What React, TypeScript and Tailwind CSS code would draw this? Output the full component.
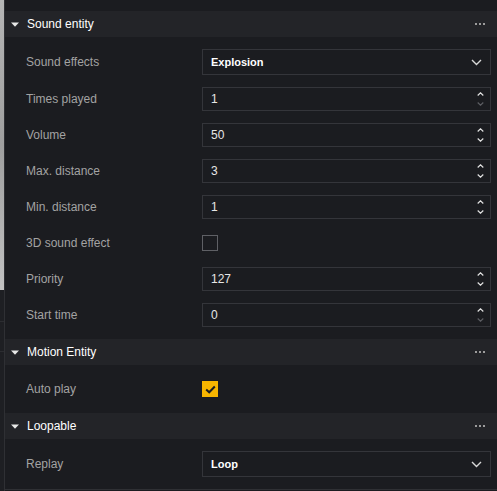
import React from 'react';

const Caret = () => (
  <svg width="8" height="5" viewBox="0 0 8 5" className="shrink-0">
    <path d="M0 0.5 L8 0.5 L4 4.8 Z" fill="#e8e8e8" />
  </svg>
);

const Dots = () => (
  <div className="flex gap-[2px]">
    <span className="w-[2px] h-[2px] bg-[#9c9c9c]" />
    <span className="w-[2px] h-[2px] bg-[#9c9c9c]" />
    <span className="w-[2px] h-[2px] bg-[#9c9c9c]" />
  </div>
);

const SectionHeader = ({ title }: { title: string }) => (
  <div className="h-[26px] bg-[#232428] flex items-center pl-[6px] pr-[12px]">
    <Caret />
    <span className="ml-[8px] text-[12px] text-white">{title}</span>
    <div className="flex-1" />
    <Dots />
  </div>
);

const Row = ({ label, children }: { label: string; children: React.ReactNode }) => (
  <div className="h-[36px] flex items-center">
    <span className="w-[176px] shrink-0 text-[12px] text-[#a3a3a3]">{label}</span>
    <div className="flex-1 flex items-center">{children}</div>
  </div>
);

const Select = ({ value }: { value: string }) => (
  <div className="w-full h-[26px] border border-[#34353a] flex items-center pl-[8px] pr-[8px]">
    <span className="text-[11px] font-bold text-white">{value}</span>
    <div className="flex-1" />
    <svg width="11" height="7" viewBox="0 0 11 7">
      <path d="M1 1 L5.5 5.5 L10 1" stroke="#d8d8d8" strokeWidth="1.4" fill="none" />
    </svg>
  </div>
);

const NumberInput = ({ value, downDisabled }: { value: string; downDisabled?: boolean }) => (
  <div className="w-full h-[24px] border border-[#34353a] flex items-center pl-[8px] pr-[6px]">
    <span className="text-[12px] text-[#e6e6e6]">{value}</span>
    <div className="flex-1" />
    <div className="flex flex-col items-center gap-[6px]">
      <svg width="7" height="4" viewBox="0 0 7 4">
        <path d="M0.7 3.5 L3.5 0.8 L6.3 3.5" stroke="#e0e0e0" strokeWidth="1.2" fill="none" />
      </svg>
      <svg width="7" height="4" viewBox="0 0 7 4">
        <path d="M0.7 0.5 L3.5 3.2 L6.3 0.5" stroke={downDisabled ? '#5c5d62' : '#e0e0e0'} strokeWidth="1.2" fill="none" />
      </svg>
    </div>
  </div>
);

const Checkbox = ({ checked }: { checked?: boolean }) =>
  checked ? (
    <div className="w-[16px] h-[16px] bg-[#f7b500] flex items-center justify-center">
      <svg width="11" height="9" viewBox="0 0 11 9">
        <path d="M1.2 4.5 L4.2 7.3 L9.8 1.5" stroke="#1b1c20" strokeWidth="2" fill="none" />
      </svg>
    </div>
  ) : (
    <div className="w-[16px] h-[16px] border-[1.5px] border-[#5f6065]" />
  );

export default function App() {
  return (
    <div
      className="w-[497px] h-[491px] flex bg-[#1b1c20] overflow-hidden"
      style={{ fontFamily: '"Liberation Sans", Arial, sans-serif' }}
    >
      <div className="w-[4px] shrink-0 flex flex-col">
        <div className="h-[290px] bg-gradient-to-b from-[#b5b5b5] via-[#9f9f9f] to-[#c2c2c2]" />
        <div className="flex-1 bg-[#1e1f23] flex flex-col">
          <div className="h-[32px] border-b border-[#2c2d31]" />
          <div className="h-[30px] border-b border-[#2c2d31]" />
        </div>
      </div>
      <div className="flex-1 flex flex-col pt-[11px] border-l border-[#2f3034]">
        <div className="border-b border-[#2f3034]">
          <SectionHeader title="Sound entity" />
          <div className="pl-[21px] pr-[6px] pt-[6px] pb-[6px]">
            <div className="h-[38px] flex items-center">
              <span className="w-[176px] shrink-0 text-[12px] text-[#a3a3a3]">Sound effects</span>
              <div className="flex-1">
                <Select value="Explosion" />
              </div>
            </div>
            <Row label="Times played">
              <NumberInput value="1" downDisabled />
            </Row>
            <Row label="Volume">
              <NumberInput value="50" />
            </Row>
            <Row label="Max. distance">
              <NumberInput value="3" />
            </Row>
            <Row label="Min. distance">
              <NumberInput value="1" />
            </Row>
            <Row label="3D sound effect">
              <Checkbox />
            </Row>
            <Row label="Priority">
              <NumberInput value="127" />
            </Row>
            <Row label="Start time">
              <NumberInput value="0" downDisabled />
            </Row>
          </div>
          <SectionHeader title="Motion Entity" />
          <div className="pl-[21px] pr-[6px] pt-[6px] pb-[6px]">
            <Row label="Auto play">
              <Checkbox checked />
            </Row>
          </div>
          <SectionHeader title="Loopable" />
          <div className="pl-[21px] pr-[6px] pt-[7px] pb-[7px]">
            <Row label="Replay">
              <Select value="Loop" />
            </Row>
          </div>
        </div>
      </div>
    </div>
  );
}
